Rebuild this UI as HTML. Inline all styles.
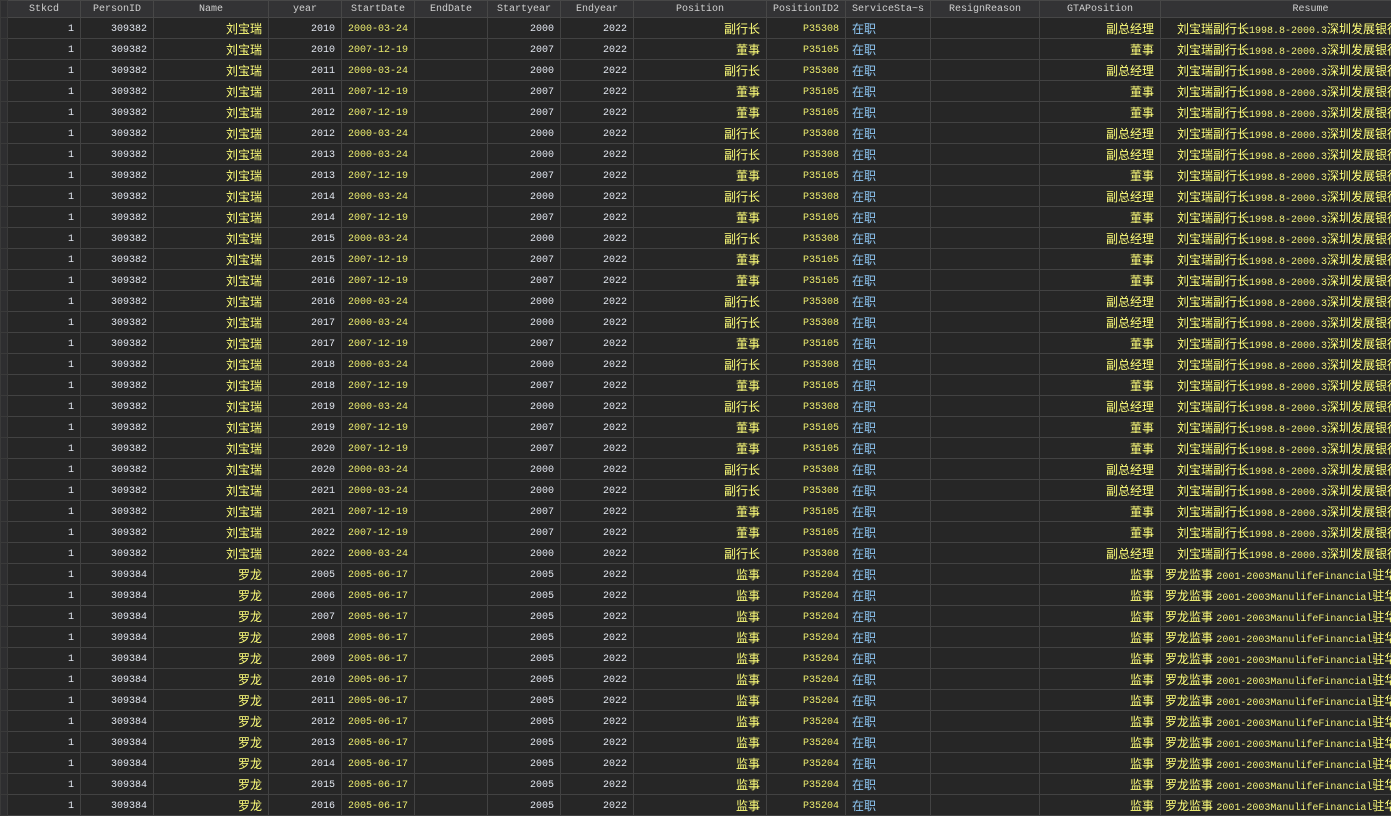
<!DOCTYPE html>
<html><head><meta charset="utf-8">
<style>
html,body{margin:0;padding:0;background:#262626;width:1391px;height:806px;overflow:hidden}
table{border-collapse:collapse;table-layout:fixed;width:1460px;position:absolute;left:0;top:0}
td,th{border:1px solid #424242;white-space:nowrap;overflow:hidden;padding:2px 6px 0 6px;font-family:"Liberation Mono",monospace;font-size:10px;color:#e2e7f0;height:18px;text-align:right;vertical-align:middle}
th{height:16px;padding:0 6px;background:#333335;color:#d0d0d0;font-weight:normal;text-align:center;border-color:#474747}
td.h,th.h{background:#2e2e30;padding:0;border-color:#3a3a3a}
.c{font-family:"Liberation Sans","Noto Sans CJK SC",sans-serif;font-size:12px;color:#ffff7a;padding-top:0;height:20px}
.d{color:#ecec6e}
.b{font-family:"Liberation Sans","Noto Sans CJK SC",sans-serif;font-size:12px;color:#8fc8f5;text-align:left;padding-top:0;height:20px}
.r{text-align:left;padding-left:16px;padding-top:0;height:20px;color:#ffff7a;font-family:"Liberation Sans","Noto Sans CJK SC",sans-serif;font-size:12px}
.r span{font-family:"Liberation Mono",monospace;font-size:10px;color:#f0f07a}
</style></head><body>
<table>
<colgroup><col style="width:7px"><col style="width:73px"><col style="width:73px"><col style="width:115px"><col style="width:73px"><col style="width:73px"><col style="width:73px"><col style="width:73px"><col style="width:73px"><col style="width:133px"><col style="width:79px"><col style="width:85px"><col style="width:109px"><col style="width:121px"><col style="width:300px"></colgroup>
<tr><th class="h"></th><th>Stkcd</th><th>PersonID</th><th>Name</th><th>year</th><th>StartDate</th><th>EndDate</th><th>Startyear</th><th>Endyear</th><th>Position</th><th>PositionID2</th><th>ServiceSta~s</th><th>ResignReason</th><th>GTAPosition</th><th>Resume</th></tr>
<tr><td class="h"></td><td>1</td><td>309382</td><td class="c">刘宝瑞</td><td>2010</td><td class="d">2000-03-24</td><td></td><td>2000</td><td>2022</td><td class="c">副行长</td><td class="d">P35308</td><td class="b">在职</td><td></td><td class="c">副总经理</td><td class="r">刘宝瑞副行长<span>1998.8-2000.3</span>深圳发展银行</td></tr>
<tr><td class="h"></td><td>1</td><td>309382</td><td class="c">刘宝瑞</td><td>2010</td><td class="d">2007-12-19</td><td></td><td>2007</td><td>2022</td><td class="c">董事</td><td class="d">P35105</td><td class="b">在职</td><td></td><td class="c">董事</td><td class="r">刘宝瑞副行长<span>1998.8-2000.3</span>深圳发展银行</td></tr>
<tr><td class="h"></td><td>1</td><td>309382</td><td class="c">刘宝瑞</td><td>2011</td><td class="d">2000-03-24</td><td></td><td>2000</td><td>2022</td><td class="c">副行长</td><td class="d">P35308</td><td class="b">在职</td><td></td><td class="c">副总经理</td><td class="r">刘宝瑞副行长<span>1998.8-2000.3</span>深圳发展银行</td></tr>
<tr><td class="h"></td><td>1</td><td>309382</td><td class="c">刘宝瑞</td><td>2011</td><td class="d">2007-12-19</td><td></td><td>2007</td><td>2022</td><td class="c">董事</td><td class="d">P35105</td><td class="b">在职</td><td></td><td class="c">董事</td><td class="r">刘宝瑞副行长<span>1998.8-2000.3</span>深圳发展银行</td></tr>
<tr><td class="h"></td><td>1</td><td>309382</td><td class="c">刘宝瑞</td><td>2012</td><td class="d">2007-12-19</td><td></td><td>2007</td><td>2022</td><td class="c">董事</td><td class="d">P35105</td><td class="b">在职</td><td></td><td class="c">董事</td><td class="r">刘宝瑞副行长<span>1998.8-2000.3</span>深圳发展银行</td></tr>
<tr><td class="h"></td><td>1</td><td>309382</td><td class="c">刘宝瑞</td><td>2012</td><td class="d">2000-03-24</td><td></td><td>2000</td><td>2022</td><td class="c">副行长</td><td class="d">P35308</td><td class="b">在职</td><td></td><td class="c">副总经理</td><td class="r">刘宝瑞副行长<span>1998.8-2000.3</span>深圳发展银行</td></tr>
<tr><td class="h"></td><td>1</td><td>309382</td><td class="c">刘宝瑞</td><td>2013</td><td class="d">2000-03-24</td><td></td><td>2000</td><td>2022</td><td class="c">副行长</td><td class="d">P35308</td><td class="b">在职</td><td></td><td class="c">副总经理</td><td class="r">刘宝瑞副行长<span>1998.8-2000.3</span>深圳发展银行</td></tr>
<tr><td class="h"></td><td>1</td><td>309382</td><td class="c">刘宝瑞</td><td>2013</td><td class="d">2007-12-19</td><td></td><td>2007</td><td>2022</td><td class="c">董事</td><td class="d">P35105</td><td class="b">在职</td><td></td><td class="c">董事</td><td class="r">刘宝瑞副行长<span>1998.8-2000.3</span>深圳发展银行</td></tr>
<tr><td class="h"></td><td>1</td><td>309382</td><td class="c">刘宝瑞</td><td>2014</td><td class="d">2000-03-24</td><td></td><td>2000</td><td>2022</td><td class="c">副行长</td><td class="d">P35308</td><td class="b">在职</td><td></td><td class="c">副总经理</td><td class="r">刘宝瑞副行长<span>1998.8-2000.3</span>深圳发展银行</td></tr>
<tr><td class="h"></td><td>1</td><td>309382</td><td class="c">刘宝瑞</td><td>2014</td><td class="d">2007-12-19</td><td></td><td>2007</td><td>2022</td><td class="c">董事</td><td class="d">P35105</td><td class="b">在职</td><td></td><td class="c">董事</td><td class="r">刘宝瑞副行长<span>1998.8-2000.3</span>深圳发展银行</td></tr>
<tr><td class="h"></td><td>1</td><td>309382</td><td class="c">刘宝瑞</td><td>2015</td><td class="d">2000-03-24</td><td></td><td>2000</td><td>2022</td><td class="c">副行长</td><td class="d">P35308</td><td class="b">在职</td><td></td><td class="c">副总经理</td><td class="r">刘宝瑞副行长<span>1998.8-2000.3</span>深圳发展银行</td></tr>
<tr><td class="h"></td><td>1</td><td>309382</td><td class="c">刘宝瑞</td><td>2015</td><td class="d">2007-12-19</td><td></td><td>2007</td><td>2022</td><td class="c">董事</td><td class="d">P35105</td><td class="b">在职</td><td></td><td class="c">董事</td><td class="r">刘宝瑞副行长<span>1998.8-2000.3</span>深圳发展银行</td></tr>
<tr><td class="h"></td><td>1</td><td>309382</td><td class="c">刘宝瑞</td><td>2016</td><td class="d">2007-12-19</td><td></td><td>2007</td><td>2022</td><td class="c">董事</td><td class="d">P35105</td><td class="b">在职</td><td></td><td class="c">董事</td><td class="r">刘宝瑞副行长<span>1998.8-2000.3</span>深圳发展银行</td></tr>
<tr><td class="h"></td><td>1</td><td>309382</td><td class="c">刘宝瑞</td><td>2016</td><td class="d">2000-03-24</td><td></td><td>2000</td><td>2022</td><td class="c">副行长</td><td class="d">P35308</td><td class="b">在职</td><td></td><td class="c">副总经理</td><td class="r">刘宝瑞副行长<span>1998.8-2000.3</span>深圳发展银行</td></tr>
<tr><td class="h"></td><td>1</td><td>309382</td><td class="c">刘宝瑞</td><td>2017</td><td class="d">2000-03-24</td><td></td><td>2000</td><td>2022</td><td class="c">副行长</td><td class="d">P35308</td><td class="b">在职</td><td></td><td class="c">副总经理</td><td class="r">刘宝瑞副行长<span>1998.8-2000.3</span>深圳发展银行</td></tr>
<tr><td class="h"></td><td>1</td><td>309382</td><td class="c">刘宝瑞</td><td>2017</td><td class="d">2007-12-19</td><td></td><td>2007</td><td>2022</td><td class="c">董事</td><td class="d">P35105</td><td class="b">在职</td><td></td><td class="c">董事</td><td class="r">刘宝瑞副行长<span>1998.8-2000.3</span>深圳发展银行</td></tr>
<tr><td class="h"></td><td>1</td><td>309382</td><td class="c">刘宝瑞</td><td>2018</td><td class="d">2000-03-24</td><td></td><td>2000</td><td>2022</td><td class="c">副行长</td><td class="d">P35308</td><td class="b">在职</td><td></td><td class="c">副总经理</td><td class="r">刘宝瑞副行长<span>1998.8-2000.3</span>深圳发展银行</td></tr>
<tr><td class="h"></td><td>1</td><td>309382</td><td class="c">刘宝瑞</td><td>2018</td><td class="d">2007-12-19</td><td></td><td>2007</td><td>2022</td><td class="c">董事</td><td class="d">P35105</td><td class="b">在职</td><td></td><td class="c">董事</td><td class="r">刘宝瑞副行长<span>1998.8-2000.3</span>深圳发展银行</td></tr>
<tr><td class="h"></td><td>1</td><td>309382</td><td class="c">刘宝瑞</td><td>2019</td><td class="d">2000-03-24</td><td></td><td>2000</td><td>2022</td><td class="c">副行长</td><td class="d">P35308</td><td class="b">在职</td><td></td><td class="c">副总经理</td><td class="r">刘宝瑞副行长<span>1998.8-2000.3</span>深圳发展银行</td></tr>
<tr><td class="h"></td><td>1</td><td>309382</td><td class="c">刘宝瑞</td><td>2019</td><td class="d">2007-12-19</td><td></td><td>2007</td><td>2022</td><td class="c">董事</td><td class="d">P35105</td><td class="b">在职</td><td></td><td class="c">董事</td><td class="r">刘宝瑞副行长<span>1998.8-2000.3</span>深圳发展银行</td></tr>
<tr><td class="h"></td><td>1</td><td>309382</td><td class="c">刘宝瑞</td><td>2020</td><td class="d">2007-12-19</td><td></td><td>2007</td><td>2022</td><td class="c">董事</td><td class="d">P35105</td><td class="b">在职</td><td></td><td class="c">董事</td><td class="r">刘宝瑞副行长<span>1998.8-2000.3</span>深圳发展银行</td></tr>
<tr><td class="h"></td><td>1</td><td>309382</td><td class="c">刘宝瑞</td><td>2020</td><td class="d">2000-03-24</td><td></td><td>2000</td><td>2022</td><td class="c">副行长</td><td class="d">P35308</td><td class="b">在职</td><td></td><td class="c">副总经理</td><td class="r">刘宝瑞副行长<span>1998.8-2000.3</span>深圳发展银行</td></tr>
<tr><td class="h"></td><td>1</td><td>309382</td><td class="c">刘宝瑞</td><td>2021</td><td class="d">2000-03-24</td><td></td><td>2000</td><td>2022</td><td class="c">副行长</td><td class="d">P35308</td><td class="b">在职</td><td></td><td class="c">副总经理</td><td class="r">刘宝瑞副行长<span>1998.8-2000.3</span>深圳发展银行</td></tr>
<tr><td class="h"></td><td>1</td><td>309382</td><td class="c">刘宝瑞</td><td>2021</td><td class="d">2007-12-19</td><td></td><td>2007</td><td>2022</td><td class="c">董事</td><td class="d">P35105</td><td class="b">在职</td><td></td><td class="c">董事</td><td class="r">刘宝瑞副行长<span>1998.8-2000.3</span>深圳发展银行</td></tr>
<tr><td class="h"></td><td>1</td><td>309382</td><td class="c">刘宝瑞</td><td>2022</td><td class="d">2007-12-19</td><td></td><td>2007</td><td>2022</td><td class="c">董事</td><td class="d">P35105</td><td class="b">在职</td><td></td><td class="c">董事</td><td class="r">刘宝瑞副行长<span>1998.8-2000.3</span>深圳发展银行</td></tr>
<tr><td class="h"></td><td>1</td><td>309382</td><td class="c">刘宝瑞</td><td>2022</td><td class="d">2000-03-24</td><td></td><td>2000</td><td>2022</td><td class="c">副行长</td><td class="d">P35308</td><td class="b">在职</td><td></td><td class="c">副总经理</td><td class="r">刘宝瑞副行长<span>1998.8-2000.3</span>深圳发展银行</td></tr>
<tr><td class="h"></td><td>1</td><td>309384</td><td class="c">罗龙</td><td>2005</td><td class="d">2005-06-17</td><td></td><td>2005</td><td>2022</td><td class="c">监事</td><td class="d">P35204</td><td class="b">在职</td><td></td><td class="c">监事</td><td class="r" style="padding-left:4px">罗龙监事 <span>2001-2003ManulifeFinancial</span>驻华</td></tr>
<tr><td class="h"></td><td>1</td><td>309384</td><td class="c">罗龙</td><td>2006</td><td class="d">2005-06-17</td><td></td><td>2005</td><td>2022</td><td class="c">监事</td><td class="d">P35204</td><td class="b">在职</td><td></td><td class="c">监事</td><td class="r" style="padding-left:4px">罗龙监事 <span>2001-2003ManulifeFinancial</span>驻华</td></tr>
<tr><td class="h"></td><td>1</td><td>309384</td><td class="c">罗龙</td><td>2007</td><td class="d">2005-06-17</td><td></td><td>2005</td><td>2022</td><td class="c">监事</td><td class="d">P35204</td><td class="b">在职</td><td></td><td class="c">监事</td><td class="r" style="padding-left:4px">罗龙监事 <span>2001-2003ManulifeFinancial</span>驻华</td></tr>
<tr><td class="h"></td><td>1</td><td>309384</td><td class="c">罗龙</td><td>2008</td><td class="d">2005-06-17</td><td></td><td>2005</td><td>2022</td><td class="c">监事</td><td class="d">P35204</td><td class="b">在职</td><td></td><td class="c">监事</td><td class="r" style="padding-left:4px">罗龙监事 <span>2001-2003ManulifeFinancial</span>驻华</td></tr>
<tr><td class="h"></td><td>1</td><td>309384</td><td class="c">罗龙</td><td>2009</td><td class="d">2005-06-17</td><td></td><td>2005</td><td>2022</td><td class="c">监事</td><td class="d">P35204</td><td class="b">在职</td><td></td><td class="c">监事</td><td class="r" style="padding-left:4px">罗龙监事 <span>2001-2003ManulifeFinancial</span>驻华</td></tr>
<tr><td class="h"></td><td>1</td><td>309384</td><td class="c">罗龙</td><td>2010</td><td class="d">2005-06-17</td><td></td><td>2005</td><td>2022</td><td class="c">监事</td><td class="d">P35204</td><td class="b">在职</td><td></td><td class="c">监事</td><td class="r" style="padding-left:4px">罗龙监事 <span>2001-2003ManulifeFinancial</span>驻华</td></tr>
<tr><td class="h"></td><td>1</td><td>309384</td><td class="c">罗龙</td><td>2011</td><td class="d">2005-06-17</td><td></td><td>2005</td><td>2022</td><td class="c">监事</td><td class="d">P35204</td><td class="b">在职</td><td></td><td class="c">监事</td><td class="r" style="padding-left:4px">罗龙监事 <span>2001-2003ManulifeFinancial</span>驻华</td></tr>
<tr><td class="h"></td><td>1</td><td>309384</td><td class="c">罗龙</td><td>2012</td><td class="d">2005-06-17</td><td></td><td>2005</td><td>2022</td><td class="c">监事</td><td class="d">P35204</td><td class="b">在职</td><td></td><td class="c">监事</td><td class="r" style="padding-left:4px">罗龙监事 <span>2001-2003ManulifeFinancial</span>驻华</td></tr>
<tr><td class="h"></td><td>1</td><td>309384</td><td class="c">罗龙</td><td>2013</td><td class="d">2005-06-17</td><td></td><td>2005</td><td>2022</td><td class="c">监事</td><td class="d">P35204</td><td class="b">在职</td><td></td><td class="c">监事</td><td class="r" style="padding-left:4px">罗龙监事 <span>2001-2003ManulifeFinancial</span>驻华</td></tr>
<tr><td class="h"></td><td>1</td><td>309384</td><td class="c">罗龙</td><td>2014</td><td class="d">2005-06-17</td><td></td><td>2005</td><td>2022</td><td class="c">监事</td><td class="d">P35204</td><td class="b">在职</td><td></td><td class="c">监事</td><td class="r" style="padding-left:4px">罗龙监事 <span>2001-2003ManulifeFinancial</span>驻华</td></tr>
<tr><td class="h"></td><td>1</td><td>309384</td><td class="c">罗龙</td><td>2015</td><td class="d">2005-06-17</td><td></td><td>2005</td><td>2022</td><td class="c">监事</td><td class="d">P35204</td><td class="b">在职</td><td></td><td class="c">监事</td><td class="r" style="padding-left:4px">罗龙监事 <span>2001-2003ManulifeFinancial</span>驻华</td></tr>
<tr><td class="h"></td><td>1</td><td>309384</td><td class="c">罗龙</td><td>2016</td><td class="d">2005-06-17</td><td></td><td>2005</td><td>2022</td><td class="c">监事</td><td class="d">P35204</td><td class="b">在职</td><td></td><td class="c">监事</td><td class="r" style="padding-left:4px">罗龙监事 <span>2001-2003ManulifeFinancial</span>驻华</td></tr>
</table>
</body></html>
